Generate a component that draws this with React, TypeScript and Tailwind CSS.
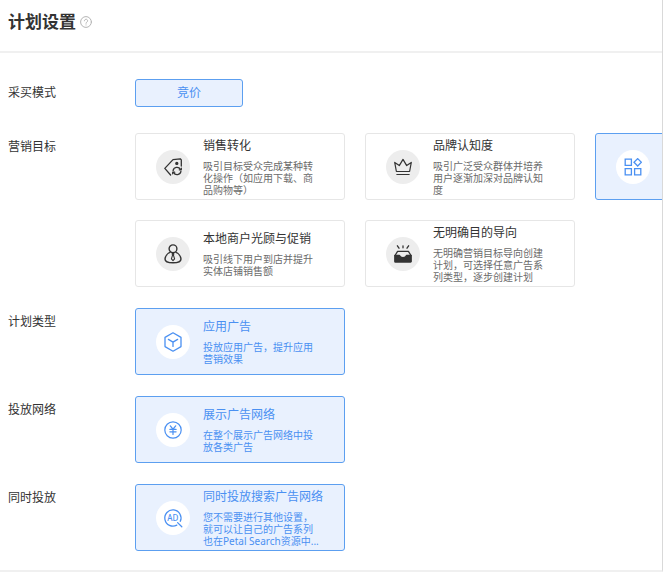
import type { ReactNode } from 'react';
import clsx from 'clsx';

const TagIcon = () => (
    <svg viewBox="0 0 18 18" className="size-[18px]" fill="none" stroke="currentColor" strokeWidth="1.3" strokeLinejoin="round" strokeLinecap="round">
        <path d="M6.600 17 .8 10.400 9 1.600l7.300-.8 1 1.100V8"/>
        <circle cx="12.800" cy="5.400" r="1" fill="currentColor"/>
        <path d="M9.100 12.600a3.900 3.900 0 0 1 7.300-1.200M16.900 13.400a3.900 3.900 0 0 1-7.300 1.200"/>
        <path d="M17.300 10.200v1.600h-2M8.700 15.800v-1.600h2"/>
    </svg>
);

const CrownIcon = () => (
    <svg viewBox="0 0 18 18" className="size-[18px]" fill="none" stroke="currentColor" strokeWidth="1.2" strokeLinejoin="round">
        <path d="M2.400 13.500.7 4.400l4.600 3.200L9 1.400l3.700 6.200 4.600-3.200-1.700 9.100Z"/>
        <path d="M2.400 16.500h13.200" strokeWidth="1"/>
    </svg>
);

const AppsIcon = () => (
    <svg viewBox="0 0 18 18" className="size-[18px]" fill="none" stroke="currentColor" strokeWidth="1.3">
        <path d="M1.200 1.200h6.200v6.200H1.200ZM1.200 10.600h6.200v6.200H1.200ZM10.600 10.600h6.200v6.200h-6.200ZM13.700.6l3.700 3.700L13.700 8 10 4.300Z"/>
    </svg>
);

const PersonIcon = () => (
    <svg viewBox="0 0 18 20" className="h-5 w-[18px]" fill="none" stroke="currentColor" strokeWidth="1.4" strokeLinejoin="round">
        <circle cx="9" cy="4.800" r="3.900"/>
        <path d="M6.500 8.200C3.400 9.400 1 12.400 1 15c0 2.600 3.600 3.800 8 3.800s8-1.200 8-3.800c0-2.600-2.400-5.600-5.500-6.800"/>
        <path d="M8.200 9.600h1.600l-.3 1.700 1.100 3.500L9 16.600l-1.600-1.800 1.100-3.500Z" strokeWidth="1.100"/>
    </svg>
);

const InboxIcon = () => (
    <svg viewBox="0 0 18 18" className="size-[18px]" fill="none" stroke="currentColor" strokeWidth="1.3" strokeLinejoin="round" strokeLinecap="round">
        <path d="m3.400.8 1.600 2.400M9 .8v2M14.600.8 13 3.200"/>
        <path d="M1 10.500 3.600 6.400h10.800l2.600 4.100"/>
        <path d="M.8 10.500h4.700c.4 1.500 1.600 2.200 3.500 2.200s3.100-.7 3.500-2.200h4.700v5.900a.6.6 0 0 1-.6.600H1.400a.6.6 0 0 1-.6-.600Z" fill="currentColor"/>
    </svg>
);

const CubeIcon = () => (
    <svg viewBox="0 0 18 20" className="h-5 w-[18px]" fill="none" stroke="currentColor" strokeWidth="1.3" strokeLinejoin="round" strokeLinecap="round">
        <path d="m9 .8 8 4.600v9.200l-8 4.600-8-4.600V5.400Z"/>
        <path d="m4.400 7.400 4.600 2.700 4.600-2.700M9 10.100v4.300"/>
    </svg>
);

const YenIcon = () => (
    <svg viewBox="0 0 18 18" className="size-[18px]" fill="none" stroke="currentColor" strokeWidth="1.2" strokeLinecap="round">
        <circle cx="9" cy="9" r="8.200"/>
        <path d="M6.300 4.800 9 8.200l2.700-3.400M9 8.200v5.200M5.900 8.400h6.200M5.900 10.800h6.200"/>
    </svg>
);

const AdSearchIcon = () => (
    <svg viewBox="0 0 18 18" className="size-[18px] overflow-visible" fill="none" stroke="currentColor" strokeWidth="1.3" strokeLinecap="round">
        <path d="M12.800 16.100a8.100 8.100 0 1 1 3.500-3.800M13.600 13.600l4.200 4.200"/>
        <text x="8.800" y="12" textAnchor="middle" fontSize="8" fontWeight="500" fill="currentColor" stroke="none">AD</text>
    </svg>
);

type Option = {
    title: string;
    text: string;
    icon: ReactNode;
    selected?: boolean;
};

const goals: Option[] = [
    { title: '销售转化', text: '吸引目标受众完成某种转化操作（如应用下载、商品购物等）', icon: <TagIcon/> },
    { title: '品牌认知度', text: '吸引广泛受众群体并培养用户逐渐加深对品牌认知度', icon: <CrownIcon/> },
    { title: '', text: '', icon: <AppsIcon/>, selected: true },
    { title: '本地商户光顾与促销', text: '吸引线下用户到店并提升实体店铺销售额', icon: <PersonIcon/> },
    { title: '无明确目的导向', text: '无明确营销目标导向创建计划，可选择任意广告系列类型，逐步创建计划', icon: <InboxIcon/> },
];

const planTypes: Option[] = [
    { title: '应用广告', text: '投放应用广告，提升应用营销效果', icon: <CubeIcon/>, selected: true },
];

const networks: Option[] = [
    { title: '展示广告网络', text: '在整个展示广告网络中投放各类广告', icon: <YenIcon/>, selected: true },
];

const extras: Option[] = [
    { title: '同时投放搜索广告网络', text: '您不需要进行其他设置，就可以让自己的广告系列也在Petal Search资源中...', icon: <AdSearchIcon/>, selected: true },
];

const OptionCard = ({ title, text, icon, selected = false }: Option) => (
    <button
        type="button"
        aria-pressed={selected}
        className={clsx(
            'flex h-[67px] items-center gap-[13px] rounded-[3px] border pl-5 text-left',
            selected ? 'border-[#5c9ff0] bg-[#e9f1fe] text-[#4a90f2]' : 'border-[#e6e6e6] bg-white text-[#333]',
        )}
    >
        <span className={clsx('flex size-[34px] shrink-0 items-center justify-center rounded-full', selected ? 'bg-white' : 'bg-[#ededed]')}>
            {icon}
        </span>
        {title && (
            <span className="flex flex-col gap-1.5">
                <span className="text-[12px] leading-4 whitespace-nowrap">{title}</span>
                <span className={clsx('w-[118px] text-[10px] leading-3', !selected && 'text-[#6b6b6b]')}>{text}</span>
            </span>
        )}
    </button>
);

const FormRow = ({ label, children }: { label: string; children: ReactNode }) => (
    <div role="group" aria-label={label} className="flex">
        <div className="w-[127px] shrink-0 text-[12px] leading-7">{label}</div>
        {children}
    </div>
);

const OptionGrid = ({ options }: { options: Option[] }) => (
    <div className="grid grid-cols-[repeat(3,210px)] gap-5">
        {options.map((option, index) => <OptionCard key={index} {...option}/>)}
    </div>
);

const App = () => {
    return (
        <main className="overflow-hidden border-r border-b-2 border-r-[#d9d9d9] border-b-[#f0f0f0] bg-white font-['Noto_Sans','Noto_Sans_CJK_SC',sans-serif] text-[#333]">
            <header className="flex items-center gap-1 border-b-2 border-[#f0f0f0] px-2 pt-2 pb-[15px]">
                <h1 className="text-[17px] leading-7 font-bold">计划设置</h1>
                <button type="button" aria-label="帮助" className="text-[#b5b5b5]">
                    <svg viewBox="0 0 12 12" className="size-3" fill="none" stroke="currentColor" strokeWidth="1" strokeLinecap="round">
                        <circle cx="6" cy="6" r="5.400"/>
                        <path d="M4.400 4.800a1.600 1.600 0 1 1 2.500 1.300c-.6.400-.9.600-.9 1.200M6 8.900v.1"/>
                    </svg>
                </button>
            </header>
            <div className="flex flex-col gap-[21px] pt-[26px] pb-[19px] pl-2">
                <div className="pb-[5px]">
                    <FormRow label="采买模式">
                        <button type="button" aria-pressed="true" className="h-7 w-[108px] rounded-[3px] border border-[#5c9ff0] bg-[#e9f1fe] text-[12px] text-[#4a90f2]">
                            竞价
                        </button>
                    </FormRow>
                </div>
                <FormRow label="营销目标"><OptionGrid options={goals}/></FormRow>
                <FormRow label="计划类型"><OptionGrid options={planTypes}/></FormRow>
                <FormRow label="投放网络"><OptionGrid options={networks}/></FormRow>
                <FormRow label="同时投放"><OptionGrid options={extras}/></FormRow>
            </div>
        </main>
    );
};

export default App;
